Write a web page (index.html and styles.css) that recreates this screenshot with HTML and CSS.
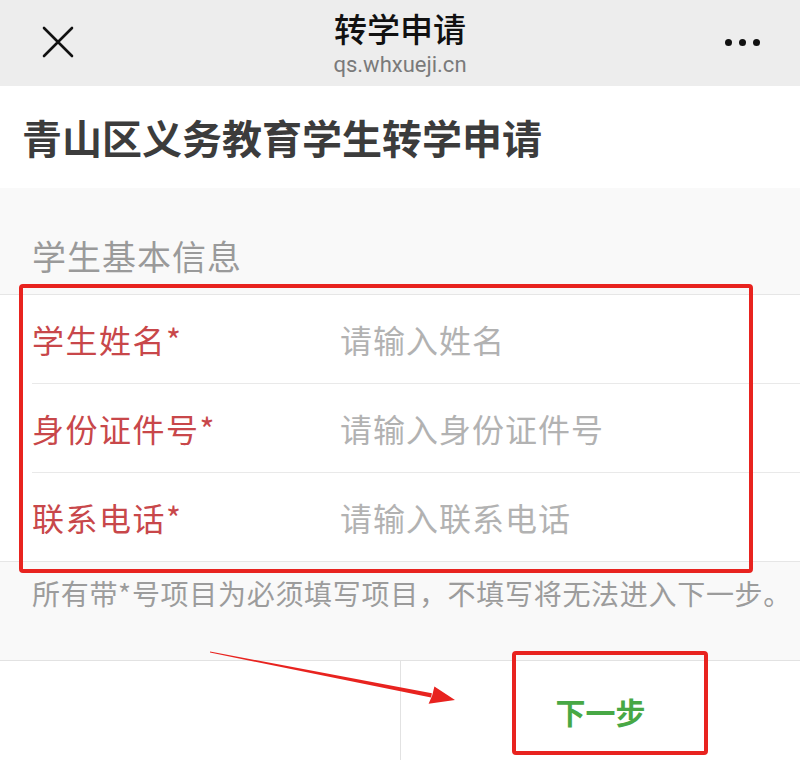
FILE: index.html
```html
<!DOCTYPE html>
<html lang="zh-CN">
<head>
<meta charset="utf-8">
<title>转学申请</title>
<link rel="stylesheet" href="styles.css">
</head>
<body>
<div class="page">
  <header class="nav">
    <div class="nav-left">
      <svg class="close-icon" width="32" height="32" viewBox="0 0 32 32" aria-hidden="true">
        <path d="M2 2 L30 30 M30 2 L2 30" stroke="#111" stroke-width="2.6" stroke-linecap="round" fill="none"/>
      </svg>
    </div>
    <div class="nav-center">
      <div class="nav-title">转学申请</div>
      <div class="nav-url">qs.whxueji.cn</div>
    </div>
    <div class="nav-right">
      <span class="dot"></span><span class="dot"></span><span class="dot"></span>
    </div>
  </header>

  <h1 class="page-title">青山区义务教育学生转学申请</h1>

  <div class="group-head">学生基本信息</div>

  <form class="form">
    <div class="row">
      <label class="label">学生姓名*</label>
      <input class="field" type="text" placeholder="请输入姓名">
    </div>
    <div class="row">
      <label class="label">身份证件号*</label>
      <input class="field" type="text" placeholder="请输入身份证件号">
    </div>
    <div class="row row-last">
      <label class="label">联系电话*</label>
      <input class="field" type="text" placeholder="请输入联系电话">
    </div>
  </form>

  <div class="note">所有带*号项目为必须填写项目，不填写将无法进入下一步。</div>

  <footer class="bottom-bar">
    <div class="bar-cell bar-left"></div>
    <div class="bar-cell bar-right"><span class="next-btn">下一步</span></div>
  </footer>

  <div class="mark mark-form"></div>
  <div class="mark mark-next"></div>
  <svg class="arrow" width="800" height="762" viewBox="0 0 800 762" aria-hidden="true">
    <polygon points="210,651.6 431.9,693.2 431.1,697.6 210,652.6" fill="#e8231f"/>
    <polygon points="455,700 428.6,703.8 432.2,695.4 434.4,686.6" fill="#e8231f"/>
  </svg>
</div>
</body>
</html>
```

FILE: styles.css
```css
* {
  box-sizing: border-box;
}

html, body {
  margin: 0;
  padding: 0;
  background: #ffffff;
}

body {
  font-family: "Noto Sans CJK SC", "Noto Sans", sans-serif;
  color: #333;
}

.page {
  position: relative;
  width: 800px;
  height: 762px;
  overflow: hidden;
  background: #ffffff;
}

/* top navigation */
.nav {
  height: 86px;
  background: #ededed;
  display: grid;
  grid-template-columns: 1fr auto 1fr;
  align-items: start;
}

.nav-left {
  padding: 26px 0 0 42px;
}

.close-icon {
  display: block;
}

.nav-center {
  padding-top: 11px;
  text-align: center;
}

.nav-title {
  font-size: 33px;
  line-height: 34px;
  font-weight: 500;
  color: #111;
}

.nav-url {
  font-family: Roboto, "Liberation Sans", sans-serif;
  font-size: 22px;
  line-height: 24px;
  color: #7a7a7a;
  margin-top: 8px;
}

.nav-right {
  display: flex;
  justify-content: flex-end;
  gap: 7px;
  padding: 39px 40px 0 0;
}

.dot {
  width: 7px;
  height: 7px;
  border-radius: 50%;
  background: #111;
}

/* page title */
.page-title {
  margin: 0;
  padding: 26px 0 26px 22px;
  font-size: 40px;
  line-height: 50px;
  font-weight: 700;
  color: #3c3c3c;
}

/* group header */
.group-head {
  background: #f9f9f9;
  padding: 46px 0 16px 32px;
  font-size: 34px;
  line-height: 44px;
  letter-spacing: 1px;
  color: #9a9a9a;
  border-bottom: 1px solid #e6e6e6;
}

/* form */
.form {
  margin: 0;
  background: #ffffff;
  border-bottom: 1px solid #e6e6e6;
}

.row {
  margin-left: 32px;
  height: 89px;
  display: flex;
  align-items: center;
  border-bottom: 1px solid #e9e9e9;
}

.row-last {
  border-bottom: none;
  height: 88px;
}

.label {
  width: 308px;
  flex: none;
  font-size: 32px;
  line-height: 40px;
  letter-spacing: 1.5px;
  color: #c8474a;
}

.field {
  flex: 1;
  min-width: 0;
  border: none;
  outline: none;
  background: transparent;
  padding: 0;
  font-family: inherit;
  font-size: 32px;
  line-height: 40px;
  letter-spacing: 1px;
  color: #333;
}

.field::placeholder {
  color: #b2b2b2;
}

/* note */
.note {
  background: #f9f9f9;
  height: 98px;
  padding: 11px 0 0 32px;
  font-size: 28px;
  line-height: 40px;
  letter-spacing: 0.7px;
  color: #9c9c9c;
  white-space: nowrap;
}

/* bottom bar */
.bottom-bar {
  height: 100px;
  display: grid;
  grid-template-columns: 401px 1fr;
  border-top: 1px solid #e2e2e2;
  background: #ffffff;
}

.bar-left {
  border-right: 1px solid #e2e2e2;
}

.bar-right {
  display: flex;
  align-items: center;
  justify-content: center;
}

.next-btn {
  font-size: 30px;
  line-height: 40px;
  font-weight: 700;
  color: #48a845;
}

/* annotation overlays */
.mark {
  position: absolute;
  border: 4px solid #e8231f;
  border-radius: 4px;
  pointer-events: none;
}

.mark-form {
  left: 19px;
  top: 284px;
  width: 734px;
  height: 289px;
}

.mark-next {
  left: 512px;
  top: 651px;
  width: 196px;
  height: 104px;
}

.arrow {
  position: absolute;
  left: 0;
  top: 0;
  pointer-events: none;
}
```
